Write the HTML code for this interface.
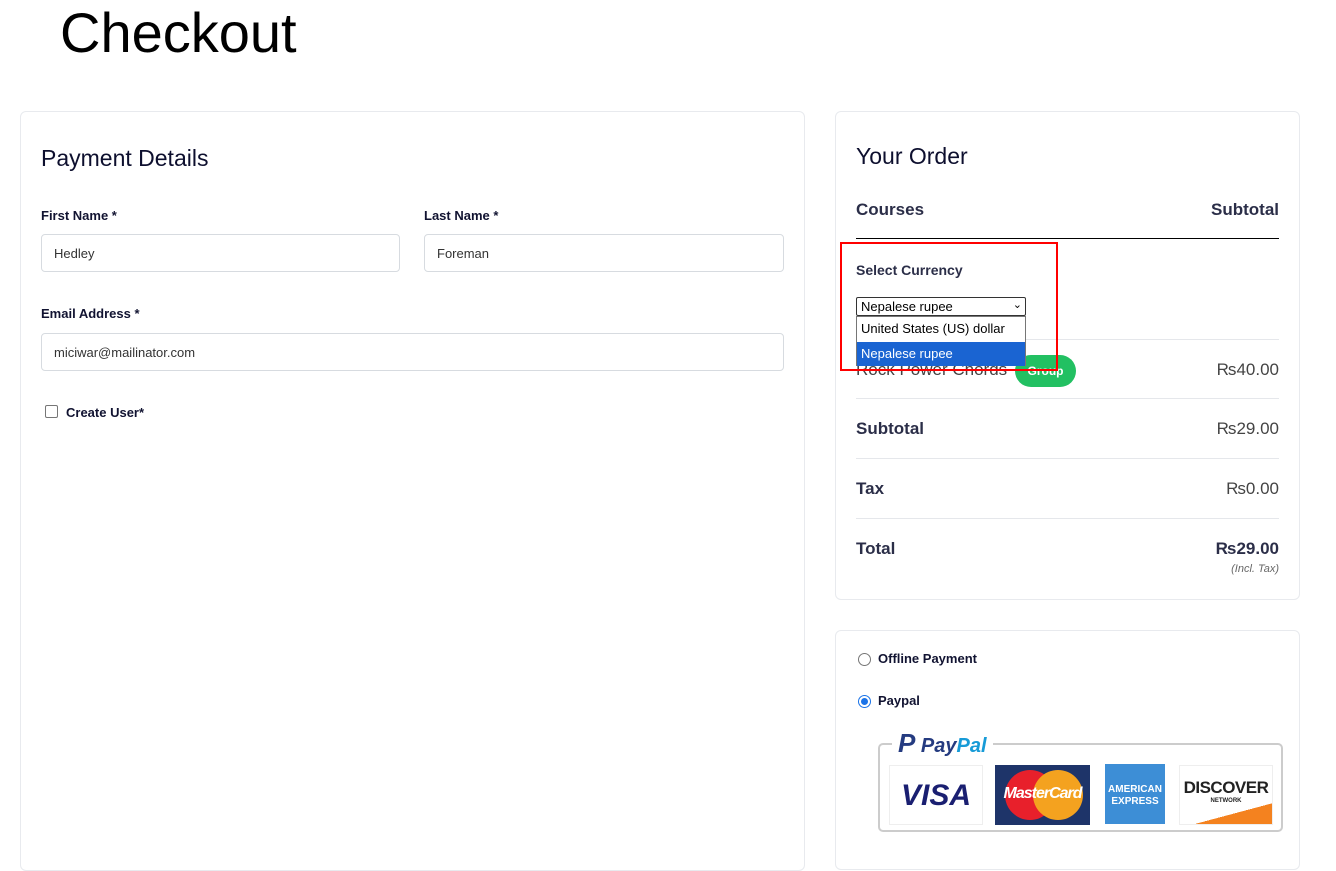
<!DOCTYPE html>
<html><head><style>
*{box-sizing:border-box;margin:0;padding:0}
body{width:1336px;height:851px;overflow:hidden;background:#fff;font-family:"Liberation Sans",sans-serif;color:#0d0f2e;position:relative}
.a{position:absolute}
.card{position:absolute;border:1px solid #e8eaee;border-radius:6px;background:#fff}
.lbl{font-size:13px;font-weight:bold;color:#111331}
.inp{position:absolute;border:1px solid #d7dbe0;border-radius:4px;height:38px;font-size:13px;color:#333;padding:11px 12px}
.row{position:absolute;left:856px;width:423px;border-top:1px solid #e5e7eb}
.k{font-size:17px;font-weight:bold;color:#2b2e48}
.v{font-size:17px;color:#444;text-align:right}
</style></head><body>
<div class="a" style="left:60px;top:0;font-size:56px;color:#000;line-height:66px">Checkout</div>

<div class="card" style="left:20px;top:111px;width:785px;height:760px"></div>
<div class="a" style="left:41px;top:145px;font-size:23px;color:#0d0f2e">Payment Details</div>
<div class="a lbl" style="left:41px;top:208px">First Name *</div>
<div class="a lbl" style="left:424px;top:208px">Last Name *</div>
<div class="inp" style="left:41px;top:234px;width:359px">Hedley</div>
<div class="inp" style="left:424px;top:234px;width:360px">Foreman</div>
<div class="a lbl" style="left:41px;top:306px">Email Address *</div>
<div class="inp" style="left:41px;top:333px;width:743px">miciwar@mailinator.com</div>
<div class="a" style="left:45px;top:405px;width:13px;height:13px;border:1px solid #767676;border-radius:2px"></div>
<div class="a lbl" style="left:66px;top:405px">Create User*</div>

<div class="card" style="left:835px;top:111px;width:465px;height:489px"></div>
<div class="a" style="left:856px;top:143px;font-size:23px">Your Order</div>
<div class="a k" style="left:856px;top:200px">Courses</div>
<div class="a k" style="left:1160px;top:200px;width:119px;text-align:right">Subtotal</div>
<div class="a" style="left:856px;top:238px;width:423px;height:1px;background:#000"></div>
<div class="a lbl" style="left:856px;top:262px;font-size:14px;color:#2b2e48">Select Currency</div>
<div class="row" style="top:339px"></div>
<div class="a" style="left:856px;top:360px;font-size:17px;color:#444">Rock Power Chords</div>
<div class="a" style="left:1015px;top:355px;width:61px;height:32px;border-radius:16px;background:#22c062;color:#fff;font-size:12px;font-weight:bold;text-align:center;line-height:32px">Group</div>
<div class="a v" style="left:1160px;top:360px;width:119px">₨40.00</div>
<div class="row" style="top:398px"></div>
<div class="a k" style="left:856px;top:419px">Subtotal</div>
<div class="a v" style="left:1160px;top:419px;width:119px">₨29.00</div>
<div class="row" style="top:458px"></div>
<div class="a k" style="left:856px;top:479px">Tax</div>
<div class="a v" style="left:1160px;top:479px;width:119px">₨0.00</div>
<div class="row" style="top:518px"></div>
<div class="a k" style="left:856px;top:539px">Total</div>
<div class="a v" style="left:1160px;top:539px;width:119px;font-weight:bold;color:#2b2e48">₨29.00</div>
<div class="a" style="left:1160px;top:563px;width:119px;text-align:right;font-size:11px;font-style:italic;color:#666">(Incl. Tax)</div>

<div class="a" style="left:856px;top:297px;width:170px;height:19px;border:1px solid #333;border-radius:2px;background:#fff;font-size:13px;color:#000;padding:1px 4px;line-height:15px">Nepalese rupee<span style="position:absolute;right:3px;top:0;font-size:11px">&#8964;</span></div>
<div class="a" style="left:856px;top:316px;width:170px;height:50px;border:1px solid #767676;background:#fff;font-size:13px;color:#000">
<div style="padding:4px 4px;height:25px">United States (US) dollar</div>
<div style="padding:4px 4px;height:24px;background:#1a64d2;color:#fff">Nepalese rupee</div></div>
<div class="a" style="left:840px;top:242px;width:218px;height:129px;border:2px solid #f00"></div>

<div class="card" style="left:835px;top:630px;width:465px;height:240px"></div>
<div class="a" style="left:858px;top:653px;width:13px;height:13px;border:1px solid #767676;border-radius:50%"></div>
<div class="a lbl" style="left:878px;top:651px">Offline Payment</div>
<div class="a" style="left:858px;top:695px;width:13px;height:13px;border:1px solid #1a73e8;border-radius:50%"><div style="margin:2px;width:7px;height:7px;border-radius:50%;background:#1a73e8"></div></div>
<div class="a lbl" style="left:878px;top:693px">Paypal</div>

<div class="a" style="left:878px;top:743px;width:405px;height:89px;border:2px solid #ccc;border-radius:5px"></div>
<div class="a" style="left:892px;top:729px;background:#fff;padding:0 6px;font-size:20px;font-weight:bold;font-style:italic;line-height:28px"><span style="color:#253b80;font-size:26px">P</span> <span style="color:#253b80">Pay</span><span style="color:#179bd7">Pal</span></div>
<div class="a" style="left:889px;top:765px;width:94px;height:60px;border:1px solid #eee;background:#fff;color:#1a1f71;font-weight:bold;font-style:italic;font-size:30px;text-align:center;line-height:60px">VISA</div>
<div class="a" style="left:995px;top:765px;width:95px;height:60px;background:#1e3469;overflow:hidden">
<div style="position:absolute;left:10px;top:5px;width:50px;height:50px;border-radius:50%;background:#e8202b"></div>
<div style="position:absolute;left:38px;top:5px;width:50px;height:50px;border-radius:50%;background:#f4a21f"></div>
<div style="position:absolute;left:0;top:20px;width:95px;text-align:center;color:#fff;font-weight:bold;font-style:italic;font-size:16px;letter-spacing:-1px">MasterCard</div></div>
<div class="a" style="left:1105px;top:764px;width:60px;height:60px;background:#3d8ed6;color:#fff;font-size:10px;font-weight:bold;line-height:12px;padding-top:20px;text-align:center">AMERICAN<br>EXPRESS</div>
<div class="a" style="left:1179px;top:765px;width:94px;height:60px;border:1px solid #eee;background:linear-gradient(165deg,#fff 75%,#f4821f 75%);text-align:center;font-weight:bold;font-size:17px;color:#222;padding-top:12px;letter-spacing:-0.5px">DISCOVER<div style="font-size:6px;letter-spacing:0">NETWORK</div></div>
</body></html>
